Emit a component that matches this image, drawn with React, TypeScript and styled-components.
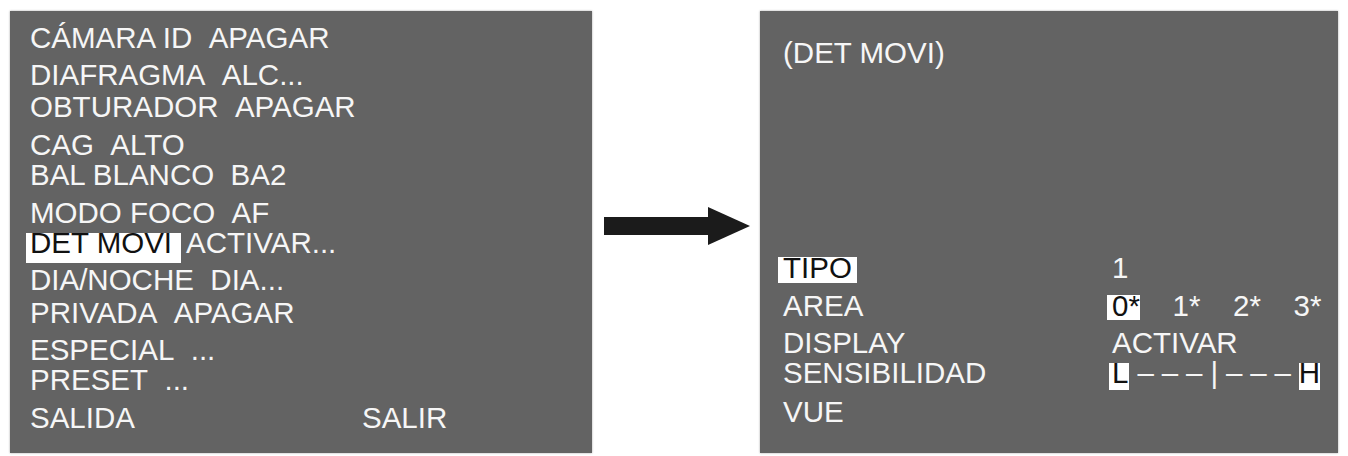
import React from "react";
import styled, { createGlobalStyle } from "styled-components";

const GlobalStyle = createGlobalStyle`
  body {
    margin: 0;
    background: #ffffff;
    font-family: "Liberation Sans", Arial, sans-serif;
  }
`;

type MenuRow = { label: string; value: string; gap: number; marked?: boolean; col?: number };

const mainMenu: MenuRow[] = [
  { label: "CÁMARA ID", value: "APAGAR", gap: 0 },
  { label: "DIAFRAGMA", value: "ALC...", gap: 9 },
  { label: "OBTURADOR", value: "APAGAR", gap: 4 },
  { label: "CAG", value: "ALTO", gap: 10 },
  { label: "BAL BLANCO", value: "BA2", gap: 2 },
  { label: "MODO FOCO", value: "AF", gap: 10 },
  { label: "DET MOVI", value: "ACTIVAR...", gap: 2, marked: true },
  { label: "DIA/NOCHE", value: "DIA...", gap: 9 },
  { label: "PRIVADA", value: "APAGAR", gap: 5 },
  { label: "ESPECIAL", value: "...", gap: 9 },
  { label: "PRESET", value: "...", gap: 2 },
  { label: "SALIDA", value: "SALIR", gap: 10, col: 332 },
];

const App: React.FC = () => {
  return (
    <>
      <GlobalStyle />
      <Page>
        <Screen $pad={13}>
          {mainMenu.map((r) => (
            <Row key={r.label} $gap={r.gap}>
              {r.marked ? (
                <Mark $pl={4} $pr={9} $pb={10} $lh={20}>{r.label}</Mark>
              ) : r.col ? (
                <Label $w={r.col}>{r.label}</Label>
              ) : (
                <span>{r.label}&nbsp;&nbsp;</span>
              )}
              {r.marked && <Space />}
              <span>{r.value}</span>
            </Row>
          ))}
        </Screen>

        <ArrowBox>
          <svg width="168" height="60" viewBox="0 0 168 60">
            <rect x="12" y="21" width="108" height="18" fill="#1b1b1b" />
            <polygon points="116,11 158,30 116,49" fill="#1b1b1b" />
          </svg>
        </ArrowBox>

        <Screen $pad={28} $left={23}>
          <Row $gap={0}>(DET MOVI)</Row>
          <Block>
            <SubRow $gap={0}>
              <Mark $pl={5} $pr={5} $pb={4} $lh={22}>TIPO</Mark>
              <Value>1</Value>
            </SubRow>
            <SubRow $gap={10}>
              <span>AREA</span>
              <Areas>
                <Mark $pl={5} $pr={0} $pb={3} $lh={22}>0*</Mark>
                <Area>1*</Area>
                <Area>2*</Area>
                <Area>3*</Area>
              </Areas>
            </SubRow>
            <SubRow $gap={9}>
              <span>DISPLAY</span>
              <Value>ACTIVAR</Value>
            </SubRow>
            <SubRow $gap={2}>
              <span>SENSIBILIDAD</span>
              <Scale>
                <Mark $pl={3} $pr={1} $pb={7} $lh={20}>L</Mark>
                <Dashes>&nbsp;– – – | – – –&nbsp;</Dashes>
                <Mark $pl={0} $pr={0} $pb={7} $lh={20}>H</Mark>
              </Scale>
            </SubRow>
            <SubRow $gap={11}>
              <span>VUE</span>
            </SubRow>
          </Block>
        </Screen>
      </Page>
    </>
  );
};

export default App;

const Page = styled.div`
  display: flex;
  align-items: stretch;
  padding: 11px 10px 3px 10px;
  height: 456px;
  box-sizing: border-box;
`;

const Screen = styled.div<{ $pad: number; $left?: number }>`
  flex: 0 0 auto;
  width: ${(p) => (p.$left ? 578 : 582)}px;
  height: 442px;
  box-sizing: border-box;
  padding: ${(p) => p.$pad}px 0 0 ${(p) => p.$left ?? 20}px;
  background: #636363;
  box-shadow: 0 0 2px rgba(0, 0, 0, 0.35);
  color: #f6f6f6;
  font-size: 29.5px;
`;

const Row = styled.div<{ $gap: number }>`
  height: 28px;
  line-height: 28px;
  margin-top: ${(p) => p.$gap}px;
  white-space: nowrap;
  display: flex;
  align-items: baseline;
`;

const Label = styled.span<{ $w: number }>`
  display: inline-block;
  width: ${(p) => p.$w}px;
`;

const Space = styled.span`
  width: 5px;
`;

const Mark = styled.span<{ $pl: number; $pr: number; $pb: number; $lh: number }>`
  display: inline-block;
  justify-self: start;
  background: #ffffff;
  color: #111111;
  line-height: ${(p) => p.$lh}px;
  margin-left: -${(p) => p.$pl}px;
  padding: 0 ${(p) => p.$pr}px ${(p) => p.$pb}px ${(p) => p.$pl}px;
`;

const Block = styled.div`
  margin-top: 187px;
`;

const SubRow = styled(Row)`
  display: grid;
  grid-template-columns: 329px auto;
`;

const Value = styled.span``;

const Areas = styled.div`
  display: grid;
  grid-template-columns: repeat(4, 60.5px);
  align-items: baseline;
`;

const Area = styled.span``;

const Scale = styled.div`
  display: flex;
  align-items: baseline;
`;

const Dashes = styled.span`
  letter-spacing: -0.15px;
`;

const ArrowBox = styled.div`
  flex: 0 0 168px;
  padding-top: 185px;
`;
